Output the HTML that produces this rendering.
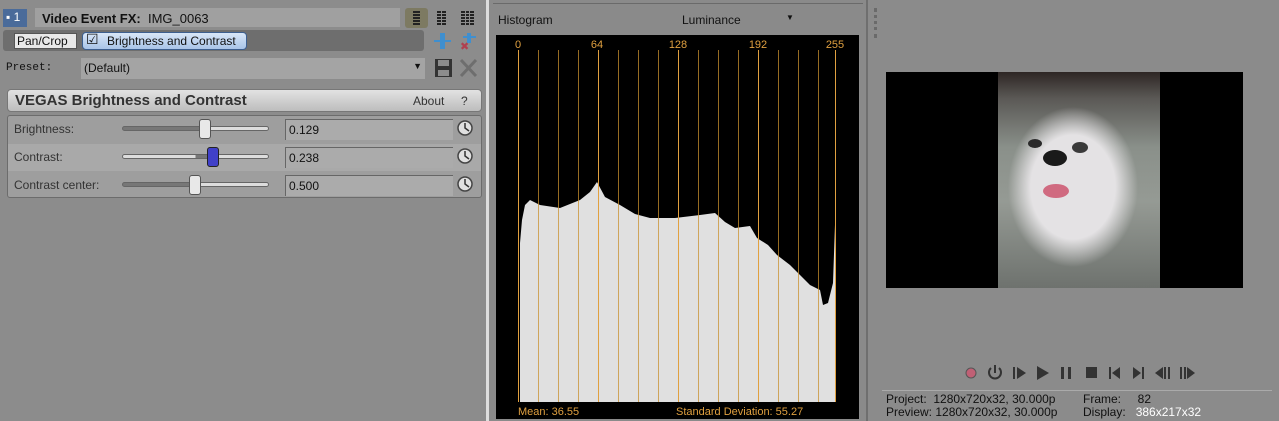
<!DOCTYPE html>
<html><head><style>
*{margin:0;padding:0;box-sizing:border-box}
body{width:1279px;height:421px;overflow:hidden;background:#8b8b8b;font-family:"Liberation Sans",sans-serif;font-size:12px;color:#111;position:relative}
.a{position:absolute}
.t{font-size:12px;white-space:nowrap}
</style></head><body>
<div class="a" style="left:0;top:0;width:490px;height:421px;background:#8c8c8c"></div>
<div class="a" style="left:3px;top:9px;width:24px;height:18px;background:#4a6b9a;color:#fff;font-size:12px;padding:1px 3px">▪ 1</div>
<div class="a" style="left:35px;top:8px;width:365px;height:19px;background:#a0a0a0"></div>
<div class="a t" style="left:42px;top:11px;font-size:13px"><b>Video Event FX:</b>&nbsp; IMG_0063</div>
<div class="a" style="left:405px;top:8px;width:23px;height:20px;background:#7d7a62;border-radius:3px"></div>
<svg class="a" style="left:0;top:0" width="490" height="200">
<g fill="#222"><rect x="413" y="11" width="7" height="2"/><rect x="413" y="14" width="7" height="2"/><rect x="413" y="17" width="7" height="2"/><rect x="413" y="20" width="7" height="2"/><rect x="413" y="23" width="7" height="2"/></g>
<g fill="#222"><rect x="437" y="11" width="4" height="2"/><rect x="442" y="11" width="4" height="2"/><rect x="437" y="14" width="4" height="2"/><rect x="442" y="14" width="4" height="2"/><rect x="437" y="17" width="4" height="2"/><rect x="442" y="17" width="4" height="2"/><rect x="437" y="20" width="4" height="2"/><rect x="442" y="20" width="4" height="2"/><rect x="437" y="23" width="4" height="2"/><rect x="442" y="23" width="4" height="2"/></g>
<g fill="#222"><rect x="461" y="11" width="13" height="14"/></g>
<g stroke="#8c8c8c" stroke-width="1"><line x1="461" y1="13.5" x2="474" y2="13.5"/><line x1="461" y1="16.5" x2="474" y2="16.5"/><line x1="461" y1="19.5" x2="474" y2="19.5"/><line x1="461" y1="22.5" x2="474" y2="22.5"/><line x1="465.5" y1="11" x2="465.5" y2="25"/><line x1="469.5" y1="11" x2="469.5" y2="25"/></g>
<circle cx="7" cy="41" r="2" fill="none" stroke="#333"/><line x1="9" y1="41" x2="14" y2="41" stroke="#333"/>
<line x1="77" y1="41" x2="82" y2="41" stroke="#333"/><line x1="247" y1="41" x2="253" y2="41" stroke="#333"/><circle cx="256" cy="41" r="2" fill="none" stroke="#333"/>
<rect x="440" y="33" width="5" height="16" fill="#3f8fcf"/><rect x="434" y="40" width="17" height="2" fill="#3f8fcf"/>
<rect x="467" y="33" width="4" height="10" fill="#3f8fcf"/><rect x="463" y="36" width="13" height="2" fill="#3f8fcf"/><text x="460" y="50" fill="#b04050" font-size="11" font-family="Liberation Sans">✖</text>
<rect x="435" y="59" width="17" height="18" fill="#333"/><rect x="438" y="60" width="11" height="6" fill="#8c8c8c"/><rect x="438" y="70" width="11" height="6" fill="#8c8c8c"/>
<path d="M461 60 L476 76 M476 60 L461 76" stroke="#6e6e6e" stroke-width="3"/>
</svg>
<div class="a" style="left:3px;top:30px;width:421px;height:21px;background:#6e6e6e;border-radius:3px;z-index:-0"></div>
<div class="a" style="left:14px;top:33px;width:63px;height:16px;background:#e8e8e8;border:1px solid #555;font-size:12px;padding-left:2px">Pan/Crop</div>
<div class="a" style="left:82px;top:32px;width:165px;height:18px;background:linear-gradient(#d8e6f7,#a9c4e8);border:1px solid #3d5f8f;border-radius:4px;font-size:12px;padding:1px 0 0 24px">Brightness and Contrast</div>
<div class="a t" style="left:86px;top:31px;font-size:14px">☑</div>
<div class="a t" style="left:6px;top:62px;font-family:'Liberation Mono',monospace;font-size:11px">Preset:</div>
<div class="a" style="left:81px;top:58px;width:344px;height:21px;background:#a4a4a4;font-size:12px;padding:3px 3px">(Default)<span style="float:right;font-size:9px">▼</span></div>
<div class="a" style="left:7px;top:89px;width:475px;height:23px;background:linear-gradient(#e2e2e2,#bdbdbd);border:1px solid #777;border-radius:4px"></div>
<div class="a t" style="left:15px;top:92px;font-size:15px;font-weight:bold;color:#333">VEGAS Brightness and Contrast</div>
<div class="a t" style="left:413px;top:94px;color:#333">About &nbsp;&nbsp;&nbsp; ?</div>
<div class="a" style="left:7px;top:115px;width:475px;height:83px;background:#9e9e9e;border:1px solid #6c6c6c;border-radius:3px"></div>
<div class="a" style="left:8px;top:144px;width:473px;height:27px;background:#a9a9a9"></div>
<div class="a t" style="left:14px;top:122px;color:#333">Brightness:</div>
<div class="a t" style="left:14px;top:150px;color:#333">Contrast:</div>
<div class="a t" style="left:14px;top:178px;color:#333">Contrast center:</div>
<div class="a" style="left:122px;top:126px;width:147px;height:5px;background:linear-gradient(90deg,#777 0 55%,#ddd 55%);border:1px solid #666;border-radius:3px"></div>
<div class="a" style="left:122px;top:154px;width:147px;height:5px;background:linear-gradient(90deg,#ddd 0 50%,#777 50% 60%,#ddd 60%);border:1px solid #666;border-radius:3px"></div>
<div class="a" style="left:122px;top:182px;width:147px;height:5px;background:linear-gradient(90deg,#777 0 50%,#ddd 50%);border:1px solid #666;border-radius:3px"></div>
<div class="a" style="left:199px;top:119px;width:12px;height:20px;background:#e8e8e8;border:1px solid #555;border-radius:3px"></div>
<div class="a" style="left:207px;top:147px;width:12px;height:20px;background:#4040c8;border:1px solid #222;border-radius:3px"></div>
<div class="a" style="left:189px;top:175px;width:12px;height:20px;background:#e8e8e8;border:1px solid #555;border-radius:3px"></div>
<div class="a" style="left:285px;top:119px;width:168px;height:21px;background:#ababab;border-top:1px solid #666;border-left:1px solid #666;padding:3px 3px">0.129</div>
<div class="a" style="left:285px;top:147px;width:168px;height:21px;background:#ababab;border-top:1px solid #666;border-left:1px solid #666;padding:3px 3px">0.238</div>
<div class="a" style="left:285px;top:175px;width:168px;height:21px;background:#ababab;border-top:1px solid #666;border-left:1px solid #666;padding:3px 3px">0.500</div>
<svg class="a" style="left:455px;top:118px" width="22" height="80">
<g fill="#e0e0e0" stroke="#444" stroke-width="1.5"><circle cx="10" cy="10" r="7"/><circle cx="10" cy="38" r="7"/><circle cx="10" cy="66" r="7"/></g>
<g stroke="#333" stroke-width="1.5" fill="none"><path d="M10 5 V10 L14 13"/><path d="M10 33 V38 L14 41"/><path d="M10 61 V66 L14 69"/></g>
</svg>
<div class="a" style="left:486px;top:0;width:3px;height:421px;background:#ddd"></div>
<div class="a" style="left:489px;top:0;width:377px;height:421px;background:#8a8a8a"></div>
<div class="a" style="left:493px;top:3px;width:370px;height:1px;background:#6a6a6a"></div>
<div class="a t" style="left:498px;top:13px">Histogram</div>
<div class="a t" style="left:682px;top:13px">Luminance</div>
<div class="a t" style="left:786px;top:13px;font-size:8px">▼</div>
<div class="a" style="left:496px;top:35px;width:363px;height:384px;background:#000"></div>
<svg class="a" style="left:0;top:0" width="1279" height="421">
<polygon fill="#e0e0e0" points="520,402 520,243 522,220 525,205 530,200 540,205 560,208 580,200 590,192 597,182 605,197 620,205 635,214 650,218 675,218 700,215 715,213 725,222 735,228 750,226 757,238 768,245 777,255 790,265 800,275 810,285 820,290 823,305 828,303 833,283 835,225 835,402"/>
<g stroke="#c8902f" stroke-width="1" stroke-opacity=".75">
<line x1="538.5" y1="50" x2="538.5" y2="402"/><line x1="558.5" y1="50" x2="558.5" y2="402"/><line x1="578.5" y1="50" x2="578.5" y2="402"/><line x1="618.5" y1="50" x2="618.5" y2="402"/><line x1="638.5" y1="50" x2="638.5" y2="402"/><line x1="658.5" y1="50" x2="658.5" y2="402"/><line x1="698.5" y1="50" x2="698.5" y2="402"/><line x1="718.5" y1="50" x2="718.5" y2="402"/><line x1="738.5" y1="50" x2="738.5" y2="402"/><line x1="778.5" y1="50" x2="778.5" y2="402"/><line x1="798.5" y1="50" x2="798.5" y2="402"/><line x1="818.5" y1="50" x2="818.5" y2="402"/>
</g>
<g stroke="#e0a040" stroke-width="1">
<line x1="518.5" y1="50" x2="518.5" y2="402"/><line x1="598.5" y1="50" x2="598.5" y2="402"/><line x1="678.5" y1="50" x2="678.5" y2="402"/><line x1="758.5" y1="50" x2="758.5" y2="402"/><line x1="835.5" y1="50" x2="835.5" y2="402"/>
</g>
<text x="518" y="48" fill="#e0a040" font-size="11" text-anchor="middle" font-family="Liberation Sans">0</text>
<text x="597" y="48" fill="#e0a040" font-size="11" text-anchor="middle" font-family="Liberation Sans">64</text>
<text x="678" y="48" fill="#e0a040" font-size="11" text-anchor="middle" font-family="Liberation Sans">128</text>
<text x="758" y="48" fill="#e0a040" font-size="11" text-anchor="middle" font-family="Liberation Sans">192</text>
<text x="835" y="48" fill="#e0a040" font-size="11" text-anchor="middle" font-family="Liberation Sans">255</text>
<text x="518" y="415" fill="#e0a040" font-size="11" font-family="Liberation Sans">Mean: 36.55</text>
<text x="676" y="415" fill="#e0a040" font-size="11" font-family="Liberation Sans">Standard Deviation: 55.27</text>
<!-- transport -->
<circle cx="971" cy="373" r="5" fill="#c06075" stroke="#555"/>
<path d="M991 368 A6 6 0 1 0 999 368" stroke="#333" stroke-width="2" fill="none"/><line x1="995" y1="365" x2="995" y2="373" stroke="#333" stroke-width="2"/>
<rect x="1013" y="367" width="2" height="12" fill="#333"/><path d="M1017 367 L1026 373 L1017 379Z" fill="#333"/>
<path d="M1037 366 L1049 373 L1037 380Z" fill="#333"/>
<rect x="1061" y="367" width="3" height="12" fill="#333"/><rect x="1068" y="367" width="3" height="12" fill="#333"/>
<rect x="1086" y="367" width="11" height="11" fill="#333"/>
<rect x="1109" y="367" width="2" height="12" fill="#333"/><path d="M1120 367 L1112 373 L1120 379Z" fill="#333"/>
<path d="M1133 367 L1141 373 L1133 379Z" fill="#333"/><rect x="1142" y="367" width="2" height="12" fill="#333"/>
<path d="M1163 367 L1155 373 L1163 379Z" fill="#333"/><rect x="1164" y="367" width="2" height="12" fill="#333"/><rect x="1168" y="367" width="2" height="12" fill="#333"/>
<rect x="1180" y="367" width="2" height="12" fill="#333"/><rect x="1184" y="367" width="2" height="12" fill="#333"/><path d="M1187 367 L1195 373 L1187 379Z" fill="#333"/>
</svg>
<div class="a" style="left:866px;top:0;width:2px;height:421px;background:#6f6f6f"></div>
<div class="a" style="left:874px;top:8px;width:4px;height:30px;border-left:3px dotted #6a6a6a"></div>
<div class="a" style="left:886px;top:72px;width:357px;height:216px;background:#000"></div>
<div class="a" style="left:998px;top:72px;width:162px;height:216px;background:radial-gradient(ellipse 65px 80px at 75px 115px,#e4e2e4 65%,rgba(0,0,0,0) 100%),linear-gradient(#2e2624 0%,#5a5855 12%,#8a908a 35%,#959a94 60%,#6e726e 100%)"></div>
<div class="a" style="left:1028px;top:139px;width:14px;height:9px;background:#2a2a2a;border-radius:50%"></div>
<div class="a" style="left:1072px;top:142px;width:16px;height:11px;background:#3a3a3a;border-radius:50%"></div>
<div class="a" style="left:1043px;top:150px;width:24px;height:16px;background:#1a1a1a;border-radius:50%"></div>
<div class="a" style="left:1043px;top:184px;width:26px;height:14px;background:#d06a80;border-radius:50%"></div>
<div class="a" style="left:882px;top:390px;width:390px;height:1px;background:#aaa"></div>
<div class="a t" style="left:886px;top:393px;line-height:13px">Project:&nbsp; 1280x720x32, 30.000p<br>Preview: 1280x720x32, 30.000p</div>
<div class="a t" style="left:1083px;top:393px;line-height:13px">Frame:&nbsp;&nbsp;&nbsp;&nbsp; 82<br>Display:&nbsp;&nbsp; <span style="color:#fff">386x217x32</span></div>
</body></html>
